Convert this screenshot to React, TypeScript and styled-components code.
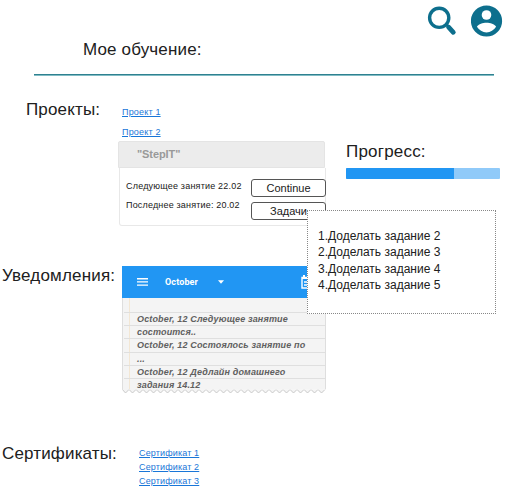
import React from "react";
import styled, { createGlobalStyle } from "styled-components";

const GlobalStyle = createGlobalStyle`
  * { box-sizing: border-box; }
  body { margin: 0; background: #fff; font-family: "Liberation Sans", Arial, sans-serif; color: #202020; overflow: hidden; }
`;

const Page = styled.main`
  position: relative;
  width: 507px;
  height: 492px;
  display: flex;
  flex-direction: column;
  background: #fff;
`;

const Header = styled.header`
  height: 74px;
  flex: none;
  margin-left: 34px;
  width: 460px;
  display: flex;
  justify-content: space-between;
`;

const Heading = styled.h2<{ $spacing?: number }>`
  margin: 0;
  font-size: 17px;
  line-height: 20px;
  font-weight: 400;
  letter-spacing: ${(p) => p.$spacing ?? 0}px;
  white-space: nowrap;
`;

const PageTitle = styled(Heading)`
  margin: 40px 0 0 49px;
`;

const HeaderIcons = styled.div`
  display: flex;
  gap: 14px;
  margin-right: -9px;
  padding-top: 5px;
`;

const Divider = styled.hr`
  width: 460px;
  height: 2px;
  flex: none;
  margin: 0 0 0 34px;
  border: 0;
  background: linear-gradient(#2f8190 50%, #81bcc4 50%);
`;

const Section = styled.section<{ $height: number; $indent: number; $column: number }>`
  display: grid;
  grid-template-columns: ${(p) => p.$column - p.$indent}px 1fr;
  height: ${(p) => p.$height}px;
  flex: none;
  padding-left: ${(p) => p.$indent}px;
`;

const SectionTitle = styled(Heading)<{ $top: number }>`
  margin-top: ${(p) => p.$top}px;
`;

const Projects = styled.div`
  display: grid;
  grid-template-columns: 228px 154px;
  align-items: start;
`;

const LinkList = styled.nav<{ $top: number; $row: number; $indent: number }>`
  display: flex;
  flex-direction: column;
  align-items: flex-start;
  padding: ${(p) => p.$top}px 0 0 ${(p) => p.$indent}px;
  a { font-size: 9px; line-height: ${(p) => p.$row}px; }
`;

const Link = styled.a<{ $spacing: number }>`
  color: #1976d8;
  text-decoration: underline;
  letter-spacing: ${(p) => p.$spacing}px;
  white-space: nowrap;
`;

const CardHeader = styled.div`
  width: 207px;
  height: 27px;
  margin-top: -1px;
  padding-left: 18px;
  border: 1px solid #e4e4e4;
  border-radius: 2px 2px 0 0;
  background: #ececec;
  color: #999;
  font-size: 11px;
  line-height: 24px;
  font-weight: 700;
  letter-spacing: -0.1px;
`;

const CardBody = styled.div`
  width: 207px;
  height: 58px;
  margin-left: 1px;
  padding: 11px 0 0 6px;
  border: 1px solid #e8e8e8;
  border-top: 0;
  border-radius: 0 0 3px 3px;
  display: flex;
  justify-content: space-between;
  align-items: flex-start;
`;

const Lessons = styled.div`
  display: flex;
  flex-direction: column;
  gap: 5px;
`;

const Actions = styled.div`
  display: flex;
  flex-direction: column;
  gap: 5px;
  margin-right: -1px;
`;

const LessonText = styled.span<{ $spacing: number }>`
  font-size: 9px;
  line-height: 14px;
  letter-spacing: ${(p) => p.$spacing}px;
  white-space: nowrap;
`;

const Button = styled.button`
  width: 75px;
  height: 18px;
  padding: 0;
  border: 1px solid #555;
  border-radius: 3px;
  background: #fff;
  color: #202020;
  font: 11px/15px "Liberation Sans", Arial, sans-serif;
`;

const ProgressTitle = styled(Heading)`
  margin: 66px 0 6px;
`;

const ProgressTrack = styled.div`
  height: 11px;
  width: 154px;
  border-radius: 1px;
  overflow: hidden;
  background: #90caf9;
`;

const ProgressValue = styled.div`
  height: 100%;
  background: #2196f3;
`;

const Planner = styled.div`
  width: 204px;
`;

const PlannerBar = styled.div`
  height: 32px;
  padding: 0 8px 0 15px;
  background: #2196f3;
  color: #fff;
  display: flex;
  align-items: center;
  svg { flex: none; display: block; }
`;

const Month = styled.span`
  width: 53px;
  margin-left: 17px;
  font: 700 9px/12px Roboto, sans-serif;
  letter-spacing: 0.12px;
`;

const CalendarSlot = styled.span`
  margin-left: auto;
`;

const Notes = styled.div`
  height: 91px;
  padding-left: 6px;
  border: solid #dedede;
  border-width: 0 1px;
  background: #f4f4f4;
`;

const NotePaper = styled.div`
  height: 91px;
  padding-top: 14px;
  border-left: 1px solid #f3e7d4;
`;

const NoteLine = styled.div`
  height: 13.2px;
  margin: 0 0 0 -6px;
  padding-left: 13px;
  border-top: 1px solid #dfdfdf;
  color: #606060;
  font-size: 9px;
  line-height: 13px;
  font-weight: 700;
  font-style: italic;
  letter-spacing: 0.15px;
  white-space: nowrap;
`;

const TornEdge = styled.svg`
  display: block;
`;

const TaskPopup = styled.aside`
  position: absolute;
  left: 307px;
  top: 210px;
  width: 189px;
  height: 104px;
  padding: 17px 0 0 10px;
  border: 1px dotted #888;
  background: #fff;
`;

const Task = styled.div`
  height: 16.4px;
  font-size: 12px;
  line-height: 16px;
  white-space: nowrap;
`;

const notes = [
  "October, 12 Следующее занятие",
  "состоится..",
  "October, 12 Состоялось занятие по",
  "...",
  "October, 12 Дедлайн домашнего",
  "задания 14.12",
];

const tasks = ["1.Доделать задание 2", "2.Доделать задание 3", "3.Доделать задание 4", "4.Доделать задание 5"];

const tornPath = "M0 0" + Array.from({ length: 29 }, (_, i) => `L${i * 7 + 3.5} 4L${i * 7 + 7} 0.5`).join("");

export default function App() {
  return (
    <>
      <GlobalStyle />
      <Page>
        <Header>
          <PageTitle as="h1" $spacing={0.15}>Мое обучение:</PageTitle>
          <HeaderIcons>
            <svg width="30" height="32" viewBox="0 0 30 32" fill="none" stroke="#0d6f8d">
              <circle cx="12.2" cy="12.8" r="9.6" strokeWidth="3.4" />
              <path d="M18.8 19L22 22" strokeWidth="3" />
              <path d="M21.6 22.2L26.3 27.3" strokeWidth="4.8" strokeLinecap="round" />
            </svg>
            <svg width="32" height="32" viewBox="0 0 32 32">
              <circle cx="15.5" cy="16" r="15.6" fill="#0d6f8d" />
              <circle cx="15.5" cy="10" r="4.8" fill="#fff" />
              <path d="M5.9 21.8C7.5 19 11.8 17.8 15.5 17.8s8 1.2 9.6 4C22.9 25.2 19.5 27.4 15.5 27.4S8.1 25.2 5.9 21.8Z" fill="#fff" />
            </svg>
          </HeaderIcons>
        </Header>
        <Divider />

        <Section $height={190} $indent={26} $column={118}>
          <SectionTitle $top={24} $spacing={0.15}>Проекты:</SectionTitle>
          <Projects>
            <div>
              <LinkList $top={26} $row={20} $indent={4}>
                <Link $spacing={0.18} href="#project-1">Проект 1</Link>
                <Link $spacing={0.18} href="#project-2">Проект 2</Link>
              </LinkList>
              <CardHeader>"StepIT"</CardHeader>
              <CardBody>
                <Lessons>
                  <LessonText $spacing={0.2}>Следующее занятие 22.02</LessonText>
                  <LessonText $spacing={0.18}>Последнее занятие: 20.02</LessonText>
                </Lessons>
                <Actions>
                  <Button>Continue</Button>
                  <Button>Задачи</Button>
                </Actions>
              </CardBody>
            </div>
            <div>
              <ProgressTitle $spacing={0.2}>Прогресс:</ProgressTitle>
              <ProgressTrack>
                <ProgressValue style={{ width: "70%" }} />
              </ProgressTrack>
            </div>
          </Projects>
        </Section>

        <Section $height={177} $indent={2} $column={122}>
          <SectionTitle $top={0} $spacing={0.18}>Уведомления:</SectionTitle>
          <Planner>
            <PlannerBar>
              <svg width="11" height="8" viewBox="0 0 11 8" fill="#fff">
                <path d="M0 0H11V1.4H0ZM0 3.2H11V4.6H0ZM0 6.4H11V7.8H0Z" />
              </svg>
              <Month>October</Month>
              <svg width="6" height="4" viewBox="0 0 6 4"><path d="M0 .3H6L3 3.7Z" fill="#fff" /></svg>
              <CalendarSlot>
                <svg width="17" height="14" viewBox="0 0 17 14" fill="none" stroke="#fff">
                  <path d="M1 2.5H12V13H1Z" strokeWidth="1.4" />
                  <path d="M1 3H12M3 0V3M10 0V3" strokeWidth="2" />
                  <path d="M3 7H10M3 10H8" strokeWidth="1.5" />
                </svg>
              </CalendarSlot>
            </PlannerBar>
            <Notes>
              <NotePaper>
                {notes.map((text) => (
                  <NoteLine key={text}>{text}</NoteLine>
                ))}
              </NotePaper>
            </Notes>
            <TornEdge width="204" height="5" viewBox="0 0 204 5">
              <path d={tornPath} fill="#f4f4f4" stroke="#c4c4c4" strokeWidth="0.9" />
              <path d="M0 0H204" stroke="#f4f4f4" />
            </TornEdge>
          </Planner>
        </Section>

        <Section $height={49} $indent={2} $column={139}>
          <SectionTitle $top={1} $spacing={0.15}>Сертификаты:</SectionTitle>
          <LinkList $top={3} $row={14} $indent={0}>
            <Link $spacing={0.15} href="#certificate-1">Сертификат 1</Link>
            <Link $spacing={0.15} href="#certificate-2">Сертификат 2</Link>
            <Link $spacing={0.15} href="#certificate-3">Сертификат 3</Link>
          </LinkList>
        </Section>

        <TaskPopup>
          {tasks.map((task) => <Task key={task}>{task}</Task>)}
        </TaskPopup>
      </Page>
    </>
  );
}
